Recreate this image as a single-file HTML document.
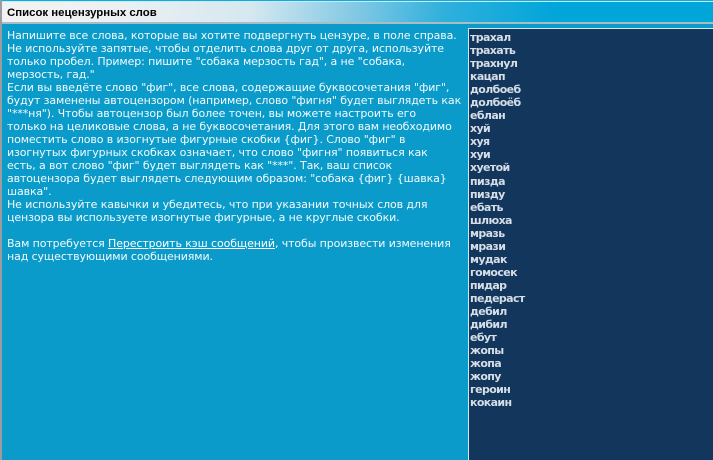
<!DOCTYPE html>
<html><head><meta charset="utf-8"><style>
html,body{margin:0;padding:0;width:713px;height:460px;overflow:hidden;background:#0a9bcb}
body{position:relative;font-family:"DejaVu Sans","Liberation Sans",sans-serif}
.a{position:absolute}
#top{left:0;top:0;width:713px;height:1px;background:#1aa9d6}
#wl{left:0;top:1px;width:713px;height:1px;background:#bdeefa}
#hd{left:2px;top:2px;width:711px;height:21px;background:linear-gradient(100deg,#f2f2f2 0%,#eef1f3 15%,#d5e8f0 35%,#80c8e4 50%,#30b0dc 62%,#00a5da 78%,#00a5da 100%)}
#hl{left:2px;top:22px;width:711px;height:2px;background:#a9bdc4}
#ttl{left:7px;top:7px;font-family:"Liberation Sans",sans-serif;font-size:11.4px;font-weight:bold;color:#000;line-height:13px;white-space:pre}
#lb{left:0;top:0;width:2px;height:460px;background:#9a9da0}
#txt{left:7px;top:29px;font-size:11px;line-height:13px;color:#f4fbfd;white-space:pre;letter-spacing:-.11px}
#txt u{color:#fff}
#box{left:468px;top:28px;width:245px;height:432px;background:#13365c;border-left:1px solid #cfeaf5;border-top:1px solid #cfeaf5;box-sizing:border-box}
#w{left:470px;top:31px;font-size:11px;font-weight:bold;line-height:13.04px;color:#d6dfe8;white-space:pre;letter-spacing:-.62px}
</style></head><body>
<div class="a" id="hd"></div>
<div class="a" id="hl"></div>
<div class="a" id="top"></div>
<div class="a" id="wl"></div>
<div class="a" id="lb"></div>
<div class="a" id="ttl">Список нецензурных слов</div>
<div class="a" id="txt">Напишите все слова, которые вы хотите подвергнуть цензуре, в поле справа.
Не используйте запятые, чтобы отделить слова друг от друга, используйте
только пробел. Пример: пишите "собака мерзость гад", а не "собака,
мерзость, гад."
Если вы введёте слово "фиг", все слова, содержащие буквосочетания "фиг",
будут заменены автоцензором (например, слово "фигня" будет выглядеть как
"***ня"). Чтобы автоцензор был более точен, вы можете настроить его
только на целиковые слова, а не буквосочетания. Для этого вам необходимо
поместить слово в изогнутые фигурные скобки {фиг}. Слово "фиг" в
изогнутых фигурных скобках означает, что слово "фигня" появиться как
есть, а вот слово "фиг" будет выглядеть как "***". Так, ваш список
автоцензора будет выглядеть следующим образом: "собака {фиг} {шавка}
шавка".
Не используйте кавычки и убедитесь, что при указании точных слов для
цензора вы используете изогнутые фигурные, а не круглые скобки.

Вам потребуется <u>Перестроить кэш сообщений</u>, чтобы произвести изменения
над существующими сообщениями.</div>
<div class="a" id="box"></div>
<div class="a" id="w">трахал
трахать
трахнул
кацап
долбоеб
долбоёб
еблан
хуй
хуя
хуи
хуетой
пизда
пизду
ебать
шлюха
мразь
мрази
мудак
гомосек
пидар
педераст
дебил
дибил
ебут
жопы
жопа
жопу
героин
кокаин</div>
</body></html>
